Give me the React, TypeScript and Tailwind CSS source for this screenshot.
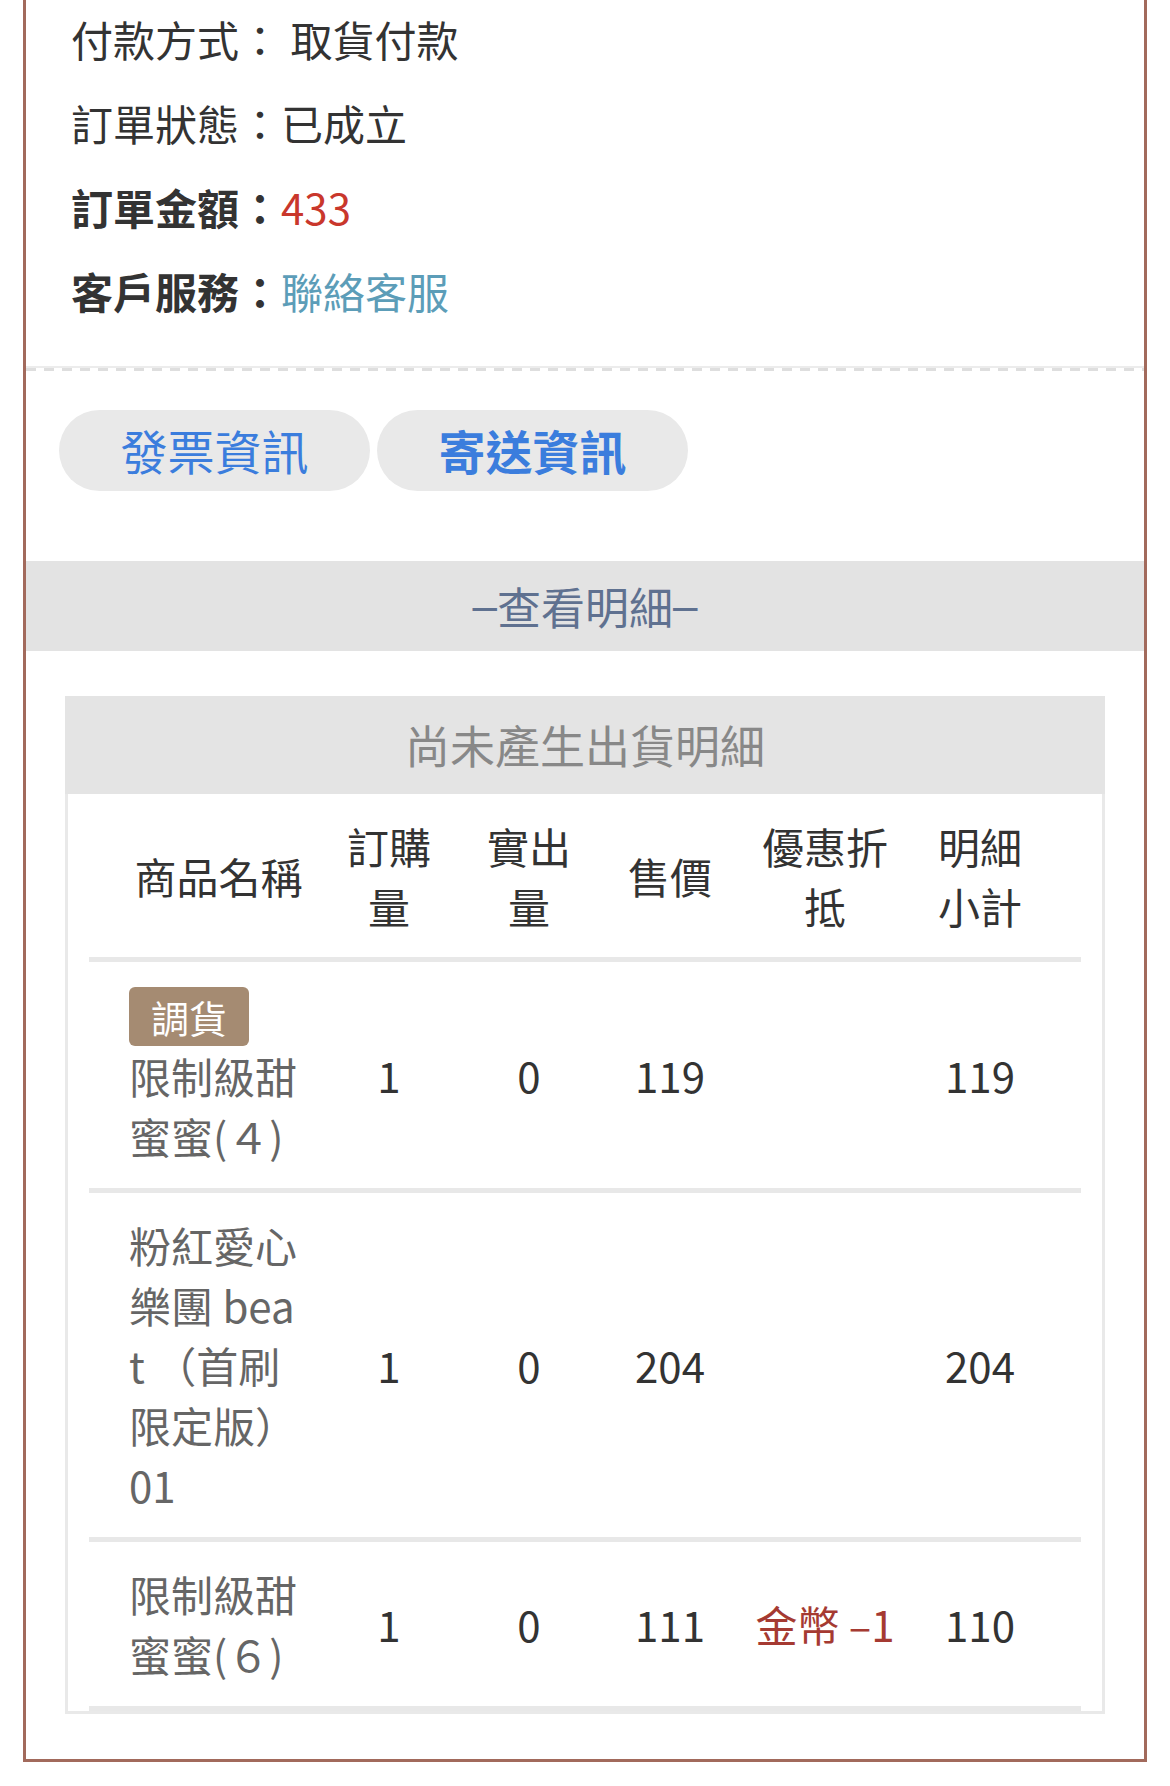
import React from "react";

type Row = {
  tag?: string;
  name: string;
  ordered: string;
  shipped: string;
  price: string;
  discount?: string;
  subtotal: string;
};

const rows: Row[] = [
  { tag: "調貨", name: "限制級甜蜜蜜(４)", ordered: "1", shipped: "0", price: "119", subtotal: "119" },
  { name: "粉紅愛心樂團 beat （首刷限定版）01", ordered: "1", shipped: "0", price: "204", subtotal: "204" },
  { name: "限制級甜蜜蜜(６)", ordered: "1", shipped: "0", price: "111", discount: "金幣 –1", subtotal: "110" },
];

const cols = "grid grid-cols-[219px_162px_118px_164px_146px_182px] items-center";

export default function App() {
  return (
    <div className="min-h-[1786px] bg-white font-['Noto_Sans_CJK_TC','Noto_Sans',sans-serif]">
      <div className="ml-[23px] w-[1124px] border-x-[3px] border-b-[3px] border-[#a26a5c] pb-[45px]">
        {/* order info */}
        <div className="-mt-[3px] pb-[33px] pl-[45px] text-[42px] leading-[84px] text-[#333]">
          <div>付款方式： 取貨付款</div>
          <div>訂單狀態：已成立</div>
          <div>
            <span className="font-bold">訂單金額：</span>
            <span className="text-[#c9372c]">433</span>
          </div>
          <div>
            <span className="font-bold">客戶服務：</span>
            <span className="text-[#5c9db8]">聯絡客服</span>
          </div>
        </div>

        <div className="h-[2px] bg-[#ececec]" />
        <div className="h-[3px] bg-[repeating-linear-gradient(90deg,#dedede_0_10px,transparent_10px_18px)]" />

        <div className="mt-[39px] flex gap-[7px] pl-[33px]">
          <button className="h-[81px] w-[311px] rounded-full bg-[#e9e9e9] text-[47px] text-[#3b7ddd]">
            發票資訊
          </button>
          <button className="h-[81px] w-[311px] rounded-full bg-[#e9e9e9] text-[47px] font-bold text-[#3b7ddd]">
            寄送資訊
          </button>
        </div>

        <div className="mt-[70px] flex h-[90px] items-center justify-center bg-[#e3e3e3] text-[44px] text-[#5f7190]">
          <span className="font-['Liberation_Sans',sans-serif]">–</span>
          查看明細
          <span className="font-['Liberation_Sans',sans-serif]">–</span>
        </div>

        {/* shipment detail box */}
        <div className="mx-[39px] mt-[45px]">
          <div className="flex h-[98px] items-center justify-center bg-[#e4e4e4] text-[45px] text-[#888]">
            尚未產生出貨明細
          </div>
          <div className="border-x-[3px] border-b-[3px] border-[#e9e9e9] px-[21px]">
            <div className={`${cols} border-b-[5px] border-[#e8e8e8] pb-[21px] pt-[22px] text-[42px] leading-[60px] text-[#333]`}>
              <div className="pl-[40px] text-center">商品名稱</div>
              <div className="text-center">訂購<br />量</div>
              <div className="text-center">實出<br />量</div>
              <div className="text-center">售價</div>
              <div className="text-center">優惠折<br />抵</div>
              <div className="pr-[18px] text-center">明細<br />小計</div>
            </div>

            {rows.map((r, i) => (
              <div
                key={i}
                className={`${cols} border-b-[5px] border-[#e8e8e8] py-[22px] text-[42px] leading-[60px] text-[#333]`}
              >
                <div className="pl-[40px]">
                  {r.tag && (
                    <span className="mt-[3px] inline-block h-[59px] rounded-[6px] bg-[#a58b72] px-[22px] text-[38px] leading-[59px] text-white">
                      {r.tag}
                    </span>
                  )}
                  <div className="w-[170px] break-all text-[#666]">{r.name}</div>
                </div>
                <div className="text-center">{r.ordered}</div>
                <div className="text-center">{r.shipped}</div>
                <div className="text-center">{r.price}</div>
                <div className="text-center text-[#a53a32]">{r.discount}</div>
                <div className="pr-[18px] text-center">{r.subtotal}</div>
              </div>
            ))}
          </div>
        </div>
      </div>
    </div>
  );
}
